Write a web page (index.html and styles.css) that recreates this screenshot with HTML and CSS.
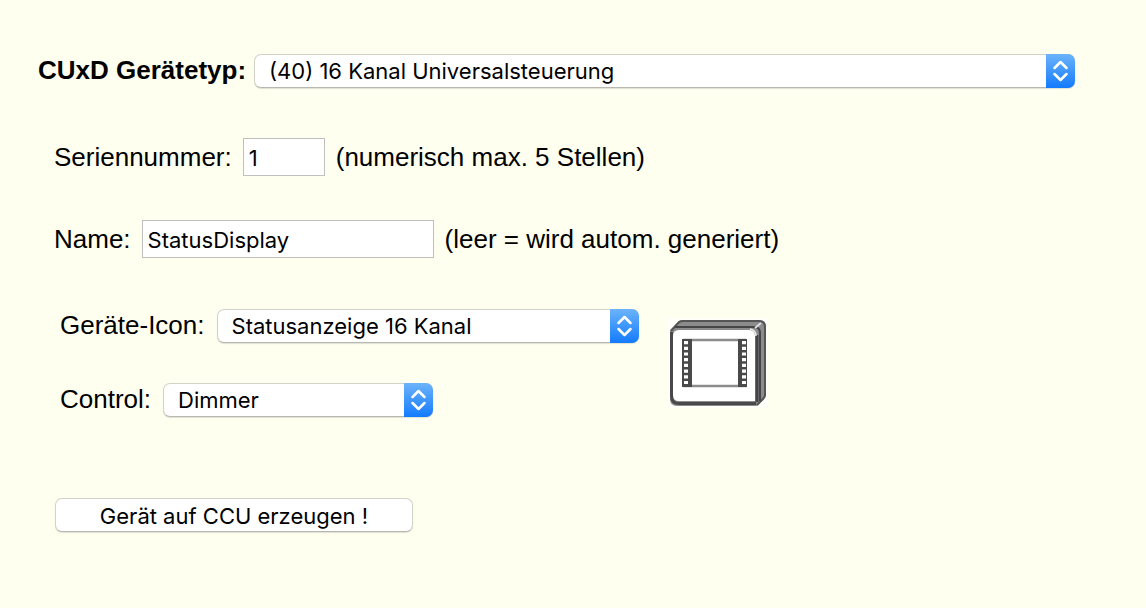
FILE: index.html
```html
<!DOCTYPE html>
<html lang="de">
<head>
<meta charset="utf-8">
<meta name="viewport" content="width=device-width, initial-scale=1">
<title>CUxD Gerät erzeugen</title>
<link rel="stylesheet" href="styles.css">
</head>
<body>
<svg class="defs" aria-hidden="true">
  <symbol id="chevrons" viewBox="0 0 29 34">
    <path d="M8.500 14 14.500 8 20.500 14M8.500 20 14.500 26 20.500 20" fill="none" stroke="#fff" stroke-width="2.500" stroke-linecap="round" stroke-linejoin="round"/>
  </symbol>
</svg>
<form class="device-form">
  <div class="row row-type">
    <label class="type-label" for="type">CUxD Gerätetyp:</label>
    <span class="select">
      <select id="type"><option>(40) 16 Kanal Universalsteuerung</option></select>
      <span class="arrows"><svg aria-hidden="true"><use href="#chevrons"/></svg></span>
    </span>
  </div>

  <div class="fields">
    <div class="row">
      <label for="serial">Seriennummer:</label>
      <input class="text serial" id="serial" type="text" maxlength="5" value="1">
      <span>(numerisch max. 5 Stellen)</span>
    </div>
    <div class="row">
      <label for="name">Name:</label>
      <input class="text name" id="name" type="text" value="StatusDisplay">
      <span>(leer = wird autom. generiert)</span>
    </div>
  </div>

  <div class="appearance">
    <div class="choices">
      <div class="row row-choice">
        <label for="icon">Geräte-Icon:</label>
        <span class="select icon-select">
          <select id="icon"><option>Statusanzeige 16 Kanal</option></select>
          <span class="arrows"><svg aria-hidden="true"><use href="#chevrons"/></svg></span>
        </span>
      </div>
      <div class="row row-choice">
        <label for="control">Control:</label>
        <span class="select control-select">
          <select id="control"><option>Dimmer</option></select>
          <span class="arrows"><svg aria-hidden="true"><use href="#chevrons"/></svg></span>
        </span>
      </div>
    </div>
    <svg class="device" viewBox="0 0 100 90" role="img" aria-label="Statusanzeige">
      <defs>
        <filter id="soft"><feGaussianBlur stdDeviation=".7"/></filter>
      </defs>
      <path d="M0 0H100V90H0Z" fill="#fff" opacity=".7"/>
      <g filter="url(#soft)">
        <path d="M2 12 10 4Q12 2 15 2H91Q98 2 98 9V77Q98 79 96 81L89 88H9Q2 88 2 81Z" fill="#8c8c8c"/>
        <path d="M3 13 11 4Q13 3 15 3H91Q97 3 97 9V77Q97 79 95 81L89 87" fill="none" stroke="#555" stroke-width="2"/>
        <path d="M7 9H86Q92 9 92 15V83" fill="none" stroke="#444" stroke-width="2"/>
        <path d="M87 10 93 5" stroke="#ddd" stroke-width="2"/>
        <path d="M5 18Q5 12 11 12H81Q87 12 87 18V83H11Q5 83 5 77Z" fill="#fff"/>
        <path d="M3.500 14V78Q3.500 85.500 11 85.500H88" fill="none" stroke="#4a4a4a" stroke-width="3"/>
        <path d="M89 17V84" fill="none" stroke="#444" stroke-width="3"/>
        <path d="M82 11Q88 12 88 18" fill="none" stroke="#eee" stroke-width="1.500"/>
        <path d="M15 22H78M15 68H78" stroke="#8c8c8c" stroke-width="2.500"/>
        <path d="M14 21H24V69H14ZM70 21H79V69H70Z" fill="#484848"/>
        <path d="M18 23V68M76 23V68" stroke="#fff" stroke-width="4" stroke-dasharray="3.200 2.500"/>
      </g>
    </svg>
  </div>

  <button class="create" type="button">Gerät auf CCU erzeugen !</button>
</form>
</body>
</html>
```
FILE: styles.css
```css
* {
  box-sizing: border-box;
}

body {
  margin: 0;
  background: #ffffef;
  color: #000;
  font: 26px/34px "Liberation Sans", Arial, sans-serif;
}

.defs {
  position: absolute;
  width: 0;
  height: 0;
}

.device-form {
  padding: 54px 71px 54px 38px;
}

.row {
  display: flex;
  align-items: center;
  gap: 11px;
}

.row-type,
.row-choice {
  align-items: flex-start;
  line-height: 32px;
}

.row-type {
  gap: 8px;
}

.row-choice {
  gap: 12px;
}

.type-label {
  font-weight: bold;
}

.fields {
  display: grid;
  gap: 44px;
  padding: 50px 0 0 16px;
}

.select {
  position: relative;
  display: flex;
  flex: 1;
  min-width: 0;
}

select,
input,
button {
  margin: 0;
  color: #000;
  background: #fff;
  font: 22px/26px Inter, sans-serif;
}

select,
.create {
  height: 34px;
  border: 1px solid #d2d2c6;
  border-bottom-color: #b8b8b0;
  border-radius: 7px;
  box-shadow: 0 1px 1px #e0e0d4;
}

select {
  width: 100%;
  padding: 0 36px 0 14px;
  appearance: none;
}

.arrows {
  position: absolute;
  inset: 0 0 0 auto;
  width: 29px;
  border-radius: 0 7px 7px 0;
  background: linear-gradient(#6cb3fa, #3f97fc 50%, #147bff);
  pointer-events: none;
}

.arrows svg {
  display: block;
  width: 29px;
  height: 34px;
}

.text {
  height: 38px;
  padding: 2px 5px 0;
  border: 1px solid #bfbfbf;
  border-radius: 0;
}

.serial {
  width: 82px;
}

.name {
  width: 292px;
}

.appearance {
  display: flex;
  align-items: flex-start;
  gap: 29px;
  padding: 51px 0 0 22px;
}

.choices {
  display: grid;
  gap: 40px;
}

.icon-select {
  flex: none;
  width: 422px;
}

.control-select {
  flex: none;
  width: 270px;
}

.device {
  width: 100px;
  height: 90px;
  margin-top: 9px;
}

.create {
  display: block;
  width: 358px;
  margin: 81px 0 0 17px;
  padding: 2px 0 0;
}
```
